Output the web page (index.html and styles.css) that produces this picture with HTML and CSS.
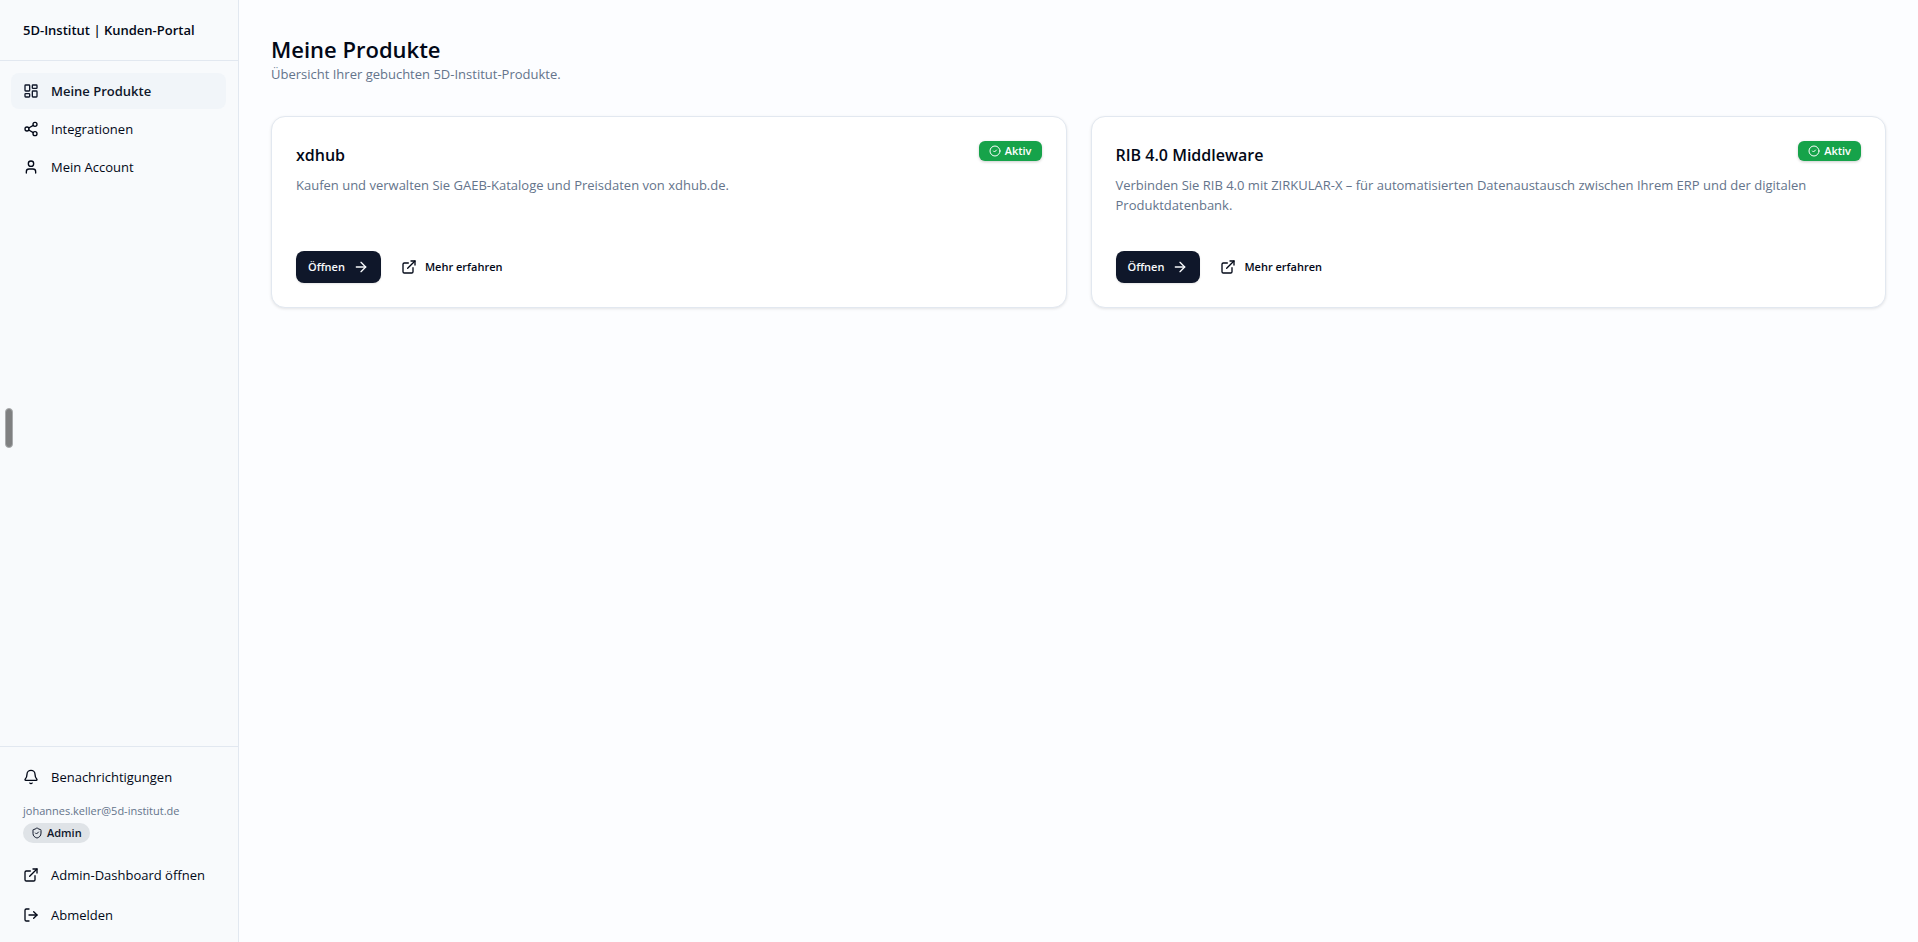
FILE: index.html
```html
<!DOCTYPE html>
<html lang="de">
<head>
    <meta charset="UTF-8">
    <meta name="viewport" content="width=device-width, initial-scale=1.0">
    <title>5D-Institut | Kunden-Portal</title>
    <link rel="stylesheet" href="styles.css">
</head>
<body>

    <!-- Shared icons -->
    <svg class="sprite" aria-hidden="true">
        <symbol id="icon-external" viewBox="0 0 24 24">
            <path d="M15 3h6v6"/>
            <path d="M10 14 21 3"/>
            <path d="M18 13v6a2 2 0 0 1-2 2H5a2 2 0 0 1-2-2V8a2 2 0 0 1 2-2h6"/>
        </symbol>
        <symbol id="icon-arrow" viewBox="0 0 24 24">
            <path d="M5 12h14"/>
            <path d="m12 5 7 7-7 7"/>
        </symbol>
        <symbol id="icon-check" viewBox="0 0 24 24">
            <circle cx="12" cy="12" r="10"/>
            <path d="m9 12 2 2 4-4"/>
        </symbol>
    </svg>

    <div class="layout">

        <!-- Sidebar -->
        <aside class="sidebar">
            <div class="brand">5D-Institut | Kunden-Portal</div>

            <nav class="nav">
                <a href="#" class="nav-item active">
                    <svg class="icon" viewBox="0 0 24 24">
                        <rect width="7" height="9" x="3" y="3" rx="1"/>
                        <rect width="7" height="5" x="14" y="3" rx="1"/>
                        <rect width="7" height="9" x="14" y="12" rx="1"/>
                        <rect width="7" height="5" x="3" y="16" rx="1"/>
                    </svg>
                    Meine Produkte
                </a>
                <a href="#" class="nav-item">
                    <svg class="icon" viewBox="0 0 24 24">
                        <circle cx="18" cy="5" r="3"/>
                        <circle cx="6" cy="12" r="3"/>
                        <circle cx="18" cy="19" r="3"/>
                        <path d="m8.59 13.51 6.83 3.98"/>
                        <path d="m15.41 6.51-6.82 3.98"/>
                    </svg>
                    Integrationen
                </a>
                <a href="#" class="nav-item">
                    <svg class="icon" viewBox="0 0 24 24">
                        <path d="M19 21v-2a4 4 0 0 0-4-4H9a4 4 0 0 0-4 4v2"/>
                        <circle cx="12" cy="7" r="4"/>
                    </svg>
                    Mein Account
                </a>
            </nav>

            <div class="sidebar-footer">
                <button type="button" class="nav-item">
                    <svg class="icon" viewBox="0 0 24 24">
                        <path d="M10.268 21a2 2 0 0 0 3.464 0"/>
                        <path d="M3.262 15.326A1 1 0 0 0 4 17h16a1 1 0 0 0 .74-1.673C19.41 13.956 18 12.499 18 8A6 6 0 0 0 6 8c0 4.499-1.411 5.956-2.738 7.326"/>
                    </svg>
                    Benachrichtigungen
                </button>
                <div class="user">
                    <p class="email">johannes.keller@5d-institut.de</p>
                    <span class="role">
                        <svg class="icon icon-small" viewBox="0 0 24 24">
                            <path d="M20 13c0 5-3.500 7.500-7.660 8.950a1 1 0 0 1-.67-.01C7.500 20.500 4 18 4 13V6a1 1 0 0 1 1-1c2 0 4.500-1.200 6.240-2.720a1.170 1.170 0 0 1 1.520 0C14.510 3.810 17 5 19 5a1 1 0 0 1 1 1z"/>
                            <path d="m9 12 2 2 4-4"/>
                        </svg>
                        Admin
                    </span>
                </div>
                <div class="footer-links">
                    <a href="#" class="nav-item">
                        <svg class="icon"><use href="#icon-external"/></svg>
                        Admin-Dashboard öffnen
                    </a>
                    <button type="button" class="nav-item">
                        <svg class="icon" viewBox="0 0 24 24">
                            <path d="M9 21H5a2 2 0 0 1-2-2V5a2 2 0 0 1 2-2h4"/>
                            <path d="m16 17 5-5-5-5"/>
                            <path d="M21 12H9"/>
                        </svg>
                        Abmelden
                    </button>
                </div>
            </div>
        </aside>

        <!-- Content -->
        <main class="content">
            <h1>Meine Produkte</h1>
            <p class="subtitle">Übersicht Ihrer gebuchten 5D-Institut-Produkte.</p>

            <div class="products">
                <section class="card">
                    <div class="card-header">
                        <h2>xdhub</h2>
                        <span class="status">
                            <svg class="icon icon-small"><use href="#icon-check"/></svg>
                            Aktiv
                        </span>
                    </div>
                    <p class="description">Kaufen und verwalten Sie GAEB-Kataloge und Preisdaten von xdhub.de.</p>
                    <div class="actions">
                        <button type="button" class="btn btn-primary">
                            Öffnen
                            <svg class="icon"><use href="#icon-arrow"/></svg>
                        </button>
                        <a href="#" class="btn">
                            <svg class="icon"><use href="#icon-external"/></svg>
                            Mehr erfahren
                        </a>
                    </div>
                </section>

                <section class="card">
                    <div class="card-header">
                        <h2>RIB 4.0 Middleware</h2>
                        <span class="status">
                            <svg class="icon icon-small"><use href="#icon-check"/></svg>
                            Aktiv
                        </span>
                    </div>
                    <p class="description">Verbinden Sie RIB 4.0 mit ZIRKULAR-X – für automatisierten Datenaustausch zwischen Ihrem ERP und der digitalen Produktdatenbank.</p>
                    <div class="actions">
                        <button type="button" class="btn btn-primary">
                            Öffnen
                            <svg class="icon"><use href="#icon-arrow"/></svg>
                        </button>
                        <a href="#" class="btn">
                            <svg class="icon"><use href="#icon-external"/></svg>
                            Mehr erfahren
                        </a>
                    </div>
                </section>
            </div>
        </main>
    </div>

    <!-- Side panel handle -->
    <div class="edge-handle"></div>

</body>
</html>
```
FILE: styles.css
```css
* {
    margin: 0;
    padding: 0;
    box-sizing: border-box;
}
body {
    font-family: 'Open Sans', sans-serif;
    font-size: 13px;
    line-height: 20px;
    color: #020817;
    background-color: #fcfdff;
}
.sprite {
    display: none;
}
.icon {
    width: 16px;
    height: 16px;
    flex-shrink: 0;
    fill: none;
    stroke: currentColor;
    stroke-width: 2;
    stroke-linecap: round;
    stroke-linejoin: round;
}
.icon-small {
    width: 12px;
    height: 12px;
}
.layout {
    display: flex;
    min-height: 100vh;
}

/* Sidebar */
.sidebar {
    display: flex;
    flex-direction: column;
    flex-shrink: 0;
    width: 239px;
    background-color: #f8fafc;
    border-right: 1px solid #e2e8f0;
}
.brand {
    padding: 20px 23px;
    font-weight: 600;
    border-bottom: 1px solid #e2e8f0;
}
.nav {
    display: flex;
    flex-direction: column;
    gap: 2px;
    flex: 1;
    padding: 12px 12px 12px 11px;
}
.nav-item {
    display: flex;
    align-items: center;
    gap: 12px;
    width: 100%;
    padding: 8px 12px;
    font: inherit;
    color: #020817;
    text-align: left;
    text-decoration: none;
    white-space: nowrap;
    background: none;
    border: none;
    border-radius: 8px;
    cursor: pointer;
}
.nav-item.active {
    font-weight: 600;
    color: #0f172a;
    background-color: #f1f5f9;
}
.nav-item:hover {
    background-color: #f1f5f9;
}
.sidebar-footer {
    padding: 12px 12px 9px 11px;
    border-top: 1px solid #e2e8f0;
}
.user {
    padding: 8px 12px 14px;
}
.email {
    margin-bottom: 4px;
    font-size: 11px;
    line-height: 16px;
    color: #64748b;
}
.role {
    display: flex;
    align-items: center;
    gap: 4px;
    width: max-content;
    padding: 2px 8px;
    font-size: 11px;
    line-height: 16px;
    font-weight: 600;
    color: #0f172a;
    background-color: #dfe3e7;
    border-radius: 10px;
}
.footer-links {
    display: flex;
    flex-direction: column;
    gap: 4px;
}

/* Content */
.content {
    flex: 1;
    padding: 34px 32px 32px;
}
h1 {
    font-size: 22px;
    line-height: 30px;
    font-weight: 600;
}
.subtitle {
    margin-bottom: 32px;
    color: #64748b;
}
.products {
    display: grid;
    grid-template-columns: 1fr 1fr;
    gap: 24px;
}
.card {
    display: flex;
    flex-direction: column;
    padding: 24px;
    background-color: #fff;
    border: 1px solid #e2e8f0;
    border-radius: 14px;
    box-shadow: 0 1px 3px rgba(0, 0, 0, 0.1);
}
.card-header {
    display: flex;
    justify-content: space-between;
    align-items: flex-start;
    margin-bottom: 6px;
}
h2 {
    font-size: 16px;
    line-height: 28px;
    font-weight: 600;
}
.status {
    display: flex;
    align-items: center;
    gap: 4px;
    padding: 2px 10px;
    font-size: 11px;
    line-height: 16px;
    font-weight: 600;
    color: #fff;
    background-color: #16a34a;
    border-radius: 6px;
    box-shadow: 0 1px 3px rgba(0, 0, 0, 0.2);
}
.description {
    margin-bottom: 36px;
    color: #64748b;
}
.actions {
    display: flex;
    gap: 8px;
    margin-top: auto;
}
.btn {
    display: flex;
    align-items: center;
    gap: 8px;
    padding: 8px 12px;
    font-family: inherit;
    font-size: 11px;
    line-height: 16px;
    font-weight: 600;
    color: #020817;
    text-decoration: none;
    background: none;
    border: none;
    border-radius: 8px;
    cursor: pointer;
}
.btn-primary {
    color: #f8fafc;
    background-color: #0f172a;
    box-shadow: 0 1px 2px rgba(0, 0, 0, 0.1);
}

/* Grip at the left window edge */
.edge-handle {
    position: fixed;
    top: 408px;
    left: 5px;
    width: 8px;
    height: 40px;
    background-color: #7f8081;
    border: 1px solid #a9abad;
    border-radius: 4px;
}

@media only screen and (max-width: 900px) {
    .products {
        grid-template-columns: 1fr;
    }
}
```
